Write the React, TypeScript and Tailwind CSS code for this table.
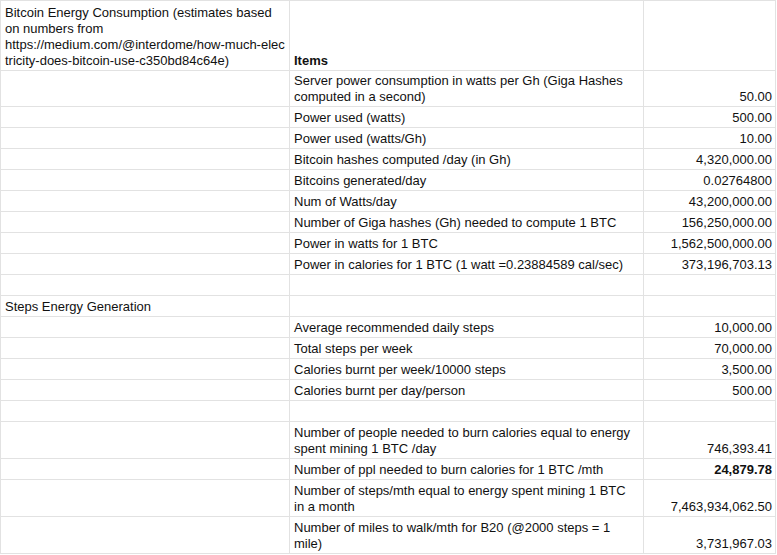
import React from 'react';

type Row = {
  a?: React.ReactNode;
  b?: React.ReactNode;
  c?: React.ReactNode;
  h: string;
  bold?: boolean;
};

const rows: Row[] = [
  {
    h: 'h-[70px]',
    a: (
      <>
        Bitcoin Energy Consumption (estimates based
        <br />
        on numbers from
        <br />
        https://medium.com/@interdome/how-much-elec
        <br />
        tricity-does-bitcoin-use-c350bd84c64e)
      </>
    ),
    b: <span className="font-bold">Items</span>,
  },
  {
    h: 'h-[36px]',
    b: (
      <>
        Server power consumption in watts per Gh (Giga Hashes
        <br />
        computed in a second)
      </>
    ),
    c: '50.00',
  },
  { h: 'h-[21px]', b: 'Power used (watts)', c: '500.00' },
  { h: 'h-[21px]', b: 'Power used (watts/Gh)', c: '10.00' },
  { h: 'h-[21px]', b: 'Bitcoin hashes computed /day (in Gh)', c: '4,320,000.00' },
  { h: 'h-[21px]', b: 'Bitcoins generated/day', c: '0.02764800' },
  { h: 'h-[21px]', b: 'Num of Watts/day', c: '43,200,000.00' },
  { h: 'h-[21px]', b: 'Number of Giga hashes (Gh) needed to compute 1 BTC', c: '156,250,000.00' },
  { h: 'h-[21px]', b: 'Power in watts for 1 BTC', c: '1,562,500,000.00' },
  { h: 'h-[21px]', b: 'Power in calories for 1 BTC (1 watt =0.23884589 cal/sec)', c: '373,196,703.13' },
  { h: 'h-[21px]' },
  { h: 'h-[21px]', a: 'Steps Energy Generation' },
  { h: 'h-[21px]', b: 'Average recommended daily steps', c: '10,000.00' },
  { h: 'h-[21px]', b: 'Total steps per week', c: '70,000.00' },
  { h: 'h-[21px]', b: 'Calories burnt per week/10000 steps', c: '3,500.00' },
  { h: 'h-[21px]', b: 'Calories burnt per day/person', c: '500.00' },
  { h: 'h-[21px]' },
  {
    h: 'h-[37px]',
    b: (
      <>
        Number of people needed to burn calories equal to energy
        <br />
        spent mining 1 BTC /day
      </>
    ),
    c: '746,393.41',
  },
  { h: 'h-[21px]', b: 'Number of ppl needed to burn calories for 1 BTC /mth', c: '24,879.78', bold: true },
  {
    h: 'h-[37px]',
    b: (
      <>
        Number of steps/mth equal to energy spent mining 1 BTC
        <br />
        in a month
      </>
    ),
    c: '7,463,934,062.50',
  },
  {
    h: 'h-[37px]',
    b: (
      <>
        Number of miles to walk/mth for B20 (@2000 steps = 1
        <br />
        mile)
      </>
    ),
    c: '3,731,967.03',
  },
];

const cell = 'flex items-end pb-[1px] border-r border-b border-[#e2e2e2] overflow-hidden whitespace-nowrap';

export default function App() {
  return (
    <div
      className="w-[777px] h-[555px] overflow-hidden bg-white text-[13px] leading-[16px] text-[#111]"
      style={{ fontFamily: '"Liberation Sans", Arial, sans-serif' }}
    >
      <div className="w-[776px] border-t border-l border-[#e2e2e2]">
        {rows.map((r, i) => (
          <div key={i} className={`grid grid-cols-[289px_354px_132px] ${r.h}`}>
            <div className={`${cell} pl-[4px] pr-[3px]`}>
              <div>{r.a}</div>
            </div>
            <div className={`${cell} pl-[4px] pr-[3px]`}>
              <div>{r.b}</div>
            </div>
            <div className={`${cell} justify-end px-[3px]`}>
              <div className={r.bold ? 'font-bold' : ''}>{r.c}</div>
            </div>
          </div>
        ))}
      </div>
    </div>
  );
}
